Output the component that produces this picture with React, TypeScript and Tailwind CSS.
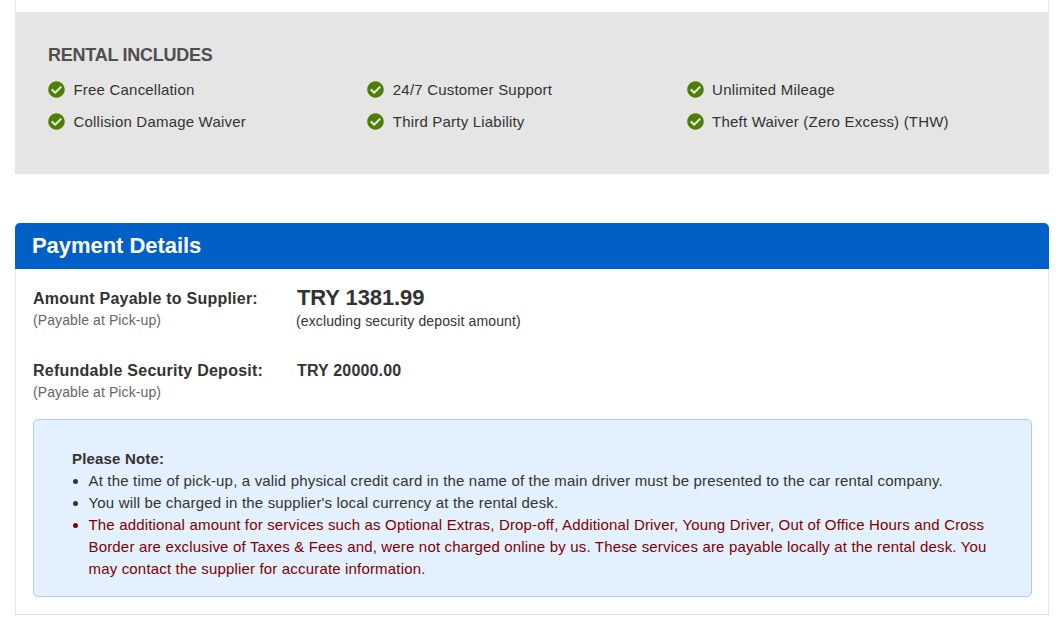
import { FaCheckCircle } from "react-icons/fa";

const items = [
  "Free Cancellation",
  "24/7 Customer Support",
  "Unlimited Mileage",
  "Collision Damage Waiver",
  "Third Party Liability",
  "Theft Waiver (Zero Excess) (THW)",
];

export default function App() {
  return (
    <div className="w-[1062px] h-[635px] overflow-hidden bg-white font-['Liberation_Sans',Arial,sans-serif] text-[#333333]">
      <div className="ml-[15px] w-[1034px]">
        <div className="h-[12px] border-x border-[#e5e5e5]" />
        <section className="h-[162px] bg-[#e5e5e5] pl-[33px] pt-[33px]">
          <h2 className="text-[18px] leading-[20px] tracking-[-0.25px] font-bold text-[#4f4f4f]">RENTAL INCLUDES</h2>
          <ul className="grid grid-cols-[319.3px_319.3px_1fr] mt-[8px]">
            {items.map((t) => (
              <li key={t} className="flex items-center h-[32px] text-[15px] tracking-[0.2px] text-[#333333]">
                <FaCheckCircle className="w-[17px] h-[17px] text-[#4c8000] shrink-0" />
                <span className="ml-[8.5px] pt-[2px]">{t}</span>
              </li>
            ))}
          </ul>
        </section>
      </div>

      <section className="ml-[15px] mt-[49px] w-[1034px]">
        <h2 className="h-[46px] rounded-t-[5px] bg-[#0060c6] pl-[17px] text-[22px] leading-[46px] tracking-[-0.05px] font-bold text-white">
          Payment Details
        </h2>
        <div className="h-[346px] border-x border-b border-[#e5e5e5] pl-[17px] pr-[17px]">
          <div className="flex pt-[20px] h-[72px]">
            <div className="w-[264px]">
              <div className="text-[16px] leading-[20px] tracking-[0.23px] font-bold">Amount Payable to Supplier:</div>
              <div className="text-[14px] leading-[23px] tracking-[0.1px] text-[#666666]">(Payable at Pick-up)</div>
            </div>
            <div>
              <div className="text-[22px] leading-[20px] tracking-[-0.1px] font-bold -mt-px">TRY 1381.99</div>
              <div className="text-[14px] leading-[24px] tracking-[0.13px] -ml-px mt-px">(excluding security deposit amount)</div>
            </div>
          </div>
          <div className="flex pt-[20px] h-[78px]">
            <div className="w-[264px]">
              <div className="text-[16px] leading-[20px] tracking-[0.25px] font-bold">Refundable Security Deposit:</div>
              <div className="text-[14px] leading-[23px] tracking-[0.1px] text-[#666666]">(Payable at Pick-up)</div>
            </div>
            <div className="text-[16px] leading-[20px] tracking-[0.17px] font-bold">TRY 20000.00</div>
          </div>
          <div className="h-[178px] w-[999px] rounded-[5px] border border-[#a9d0f7] bg-[#e3f0fe] pl-[38px] pr-[38px] pt-[28px] text-[15px] tracking-[0.17px] leading-[22px]">
            <div className="font-bold">Please Note:</div>
            <ul className="list-disc pl-[16.5px]">
              <li>At the time of pick-up, a valid physical credit card in the name of the main driver must be presented to the car rental company.</li>
              <li>You will be charged in the supplier's local currency at the rental desk.</li>
              <li className="text-[#800000]">
                The additional amount for services such as Optional Extras, Drop-off, Additional Driver, Young Driver, Out of Office Hours and Cross Border are exclusive of Taxes &amp; Fees and, were not charged online by us. These services are payable locally at the rental desk. You may contact the supplier for accurate information.
              </li>
            </ul>
          </div>
        </div>
      </section>
    </div>
  );
}
